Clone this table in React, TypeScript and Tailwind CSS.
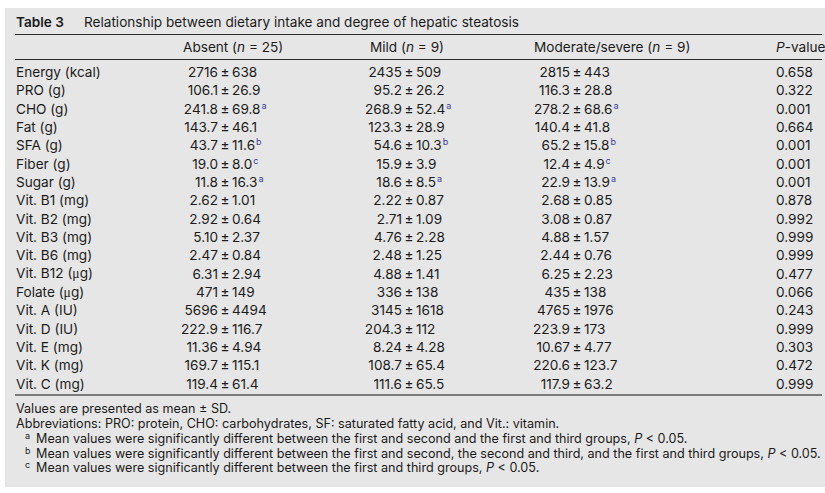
import React from "react";

type Row = {
  label: React.ReactNode;
  a: [string, string, string?];
  m: [string, string, string?];
  s: [string, string, string?];
  p: string;
};

const mu = <span style={{ fontFamily: "'Liberation Serif', serif" }}>μ</span>;

const rows: Row[] = [
  { label: "Energy (kcal)", a: ["2716", "638"], m: ["2435", "509"], s: ["2815", "443"], p: "0.658" },
  { label: "PRO (g)", a: ["106.1", "26.9"], m: ["95.2", "26.2"], s: ["116.3", "28.8"], p: "0.322" },
  { label: "CHO (g)", a: ["241.8", "69.8", "a"], m: ["268.9", "52.4", "a"], s: ["278.2", "68.6", "a"], p: "0.001" },
  { label: "Fat (g)", a: ["143.7", "46.1"], m: ["123.3", "28.9"], s: ["140.4", "41.8"], p: "0.664" },
  { label: "SFA (g)", a: ["43.7", "11.6", "b"], m: ["54.6", "10.3", "b"], s: ["65.2", "15.8", "b"], p: "0.001" },
  { label: "Fiber (g)", a: ["19.0", "8.0", "c"], m: ["15.9", "3.9"], s: ["12.4", "4.9", "c"], p: "0.001" },
  { label: "Sugar (g)", a: ["11.8", "16.3", "a"], m: ["18.6", "8.5", "a"], s: ["22.9", "13.9", "a"], p: "0.001" },
  { label: "Vit. B1 (mg)", a: ["2.62", "1.01"], m: ["2.22", "0.87"], s: ["2.68", "0.85"], p: "0.878" },
  { label: "Vit. B2 (mg)", a: ["2.92", "0.64"], m: ["2.71", "1.09"], s: ["3.08", "0.87"], p: "0.992" },
  { label: "Vit. B3 (mg)", a: ["5.10", "2.37"], m: ["4.76", "2.28"], s: ["4.88", "1.57"], p: "0.999" },
  { label: "Vit. B6 (mg)", a: ["2.47", "0.84"], m: ["2.48", "1.25"], s: ["2.44", "0.76"], p: "0.999" },
  { label: <>Vit. B12 ({mu}g)</>, a: ["6.31", "2.94"], m: ["4.88", "1.41"], s: ["6.25", "2.23"], p: "0.477" },
  { label: <>Folate ({mu}g)</>, a: ["471", "149"], m: ["336", "138"], s: ["435", "138"], p: "0.066" },
  { label: "Vit. A (IU)", a: ["5696", "4494"], m: ["3145", "1618"], s: ["4765", "1976"], p: "0.243" },
  { label: "Vit. D (IU)", a: ["222.9", "116.7"], m: ["204.3", "112"], s: ["223.9", "173"], p: "0.999" },
  { label: "Vit. E (mg)", a: ["11.36", "4.94"], m: ["8.24", "4.28"], s: ["10.67", "4.77"], p: "0.303" },
  { label: "Vit. K (mg)", a: ["169.7", "115.1"], m: ["108.7", "65.4"], s: ["220.6", "123.7"], p: "0.472" },
  { label: "Vit. C (mg)", a: ["119.4", "61.4"], m: ["111.6", "65.5"], s: ["117.9", "63.2"], p: "0.999" },
];

const Sup = ({ c }: { c: string }) => (
  <span className="relative top-[-5px] ml-[1px] text-[9px] text-[#3d3d9a]">{c}</span>
);

const Pm = () => <span className="w-[14px] shrink-0 text-center">±</span>;

export default function App() {
  return (
    <div className="min-h-screen bg-white pt-[8px] pl-[5px]" style={{ fontFamily: "Inter, 'Liberation Sans', sans-serif" }}>
      <div className="w-[820px] h-[479px] bg-[#e6e6e6] pl-[10px] pr-[3px] text-[#1b1b1b]">
        {/* title */}
        <div className="h-[27px] pt-[2px] flex items-center pl-[1px] text-[13.6px] border-b border-[#2a2a2a] whitespace-nowrap">
          <span className="font-semibold w-[68px]">Table 3</span>
          <span>Relationship between dietary intake and degree of hepatic steatosis</span>
        </div>

        {/* header */}
        <div className="h-[25px] pt-[1px] flex items-center pl-[1px] text-[13.6px] border-b border-[#2a2a2a] whitespace-nowrap">
          <span className="w-[167px] shrink-0" />
          <span className="w-[187px] shrink-0">Absent (<i>n</i> = 25)</span>
          <span className="w-[164px] shrink-0">Mild (<i>n</i> = 9)</span>
          <span className="w-[242px] shrink-0">Moderate/severe (<i>n</i> = 9)</span>
          <span><i>P</i>-value</span>
        </div>

        {/* body */}
        <div className="pt-[3px] pb-[1px] border-b-2 border-[#7a7a7a] text-[13.6px]">
          {rows.map((r, i) => (
            <div key={i} className="h-[18.35px] flex items-center pl-[1px] whitespace-nowrap">
              <span className="w-[160px] shrink-0">{r.label}</span>
              <span className="w-[42px] shrink-0 flex justify-end">{r.a[0]}</span>
              <Pm />
              <span className="w-[108px] shrink-0">{r.a[1]}{r.a[2] && <Sup c={r.a[2]} />}</span>
              <span className="w-[62px] shrink-0 flex justify-end">{r.m[0]}</span>
              <Pm />
              <span className="w-[94px] shrink-0">{r.m[1]}{r.m[2] && <Sup c={r.m[2]} />}</span>
              <span className="w-[60px] shrink-0 flex justify-end">{r.s[0]}</span>
              <Pm />
              <span className="w-[192px] shrink-0">{r.s[1]}{r.s[2] && <Sup c={r.s[2]} />}</span>
              <span>{r.p}</span>
            </div>
          ))}
        </div>

        {/* footnotes */}
        <div className="pt-[6px] pl-[1px] text-[12.6px] leading-[14.8px] whitespace-nowrap">
          <div>Values are presented as mean ± SD.</div>
          <div>Abbreviations: PRO: protein, CHO: carbohydrates, SF: saturated fatty acid, and Vit.: vitamin.</div>
          <div className="flex">
            <span className="w-[20px] pl-[9px] text-[9px] relative top-[-3px]">a</span>
            <span>Mean values were significantly different between the first and second and the first and third groups, <i>P</i> &lt; 0.05.</span>
          </div>
          <div className="flex">
            <span className="w-[20px] pl-[9px] text-[9px] relative top-[-3px]">b</span>
            <span>Mean values were significantly different between the first and second, the second and third, and the first and third groups, <i>P</i> &lt; 0.05.</span>
          </div>
          <div className="flex">
            <span className="w-[20px] pl-[9px] text-[9px] relative top-[-3px]">c</span>
            <span>Mean values were significantly different between the first and third groups, <i>P</i> &lt; 0.05.</span>
          </div>
        </div>
      </div>
    </div>
  );
}
